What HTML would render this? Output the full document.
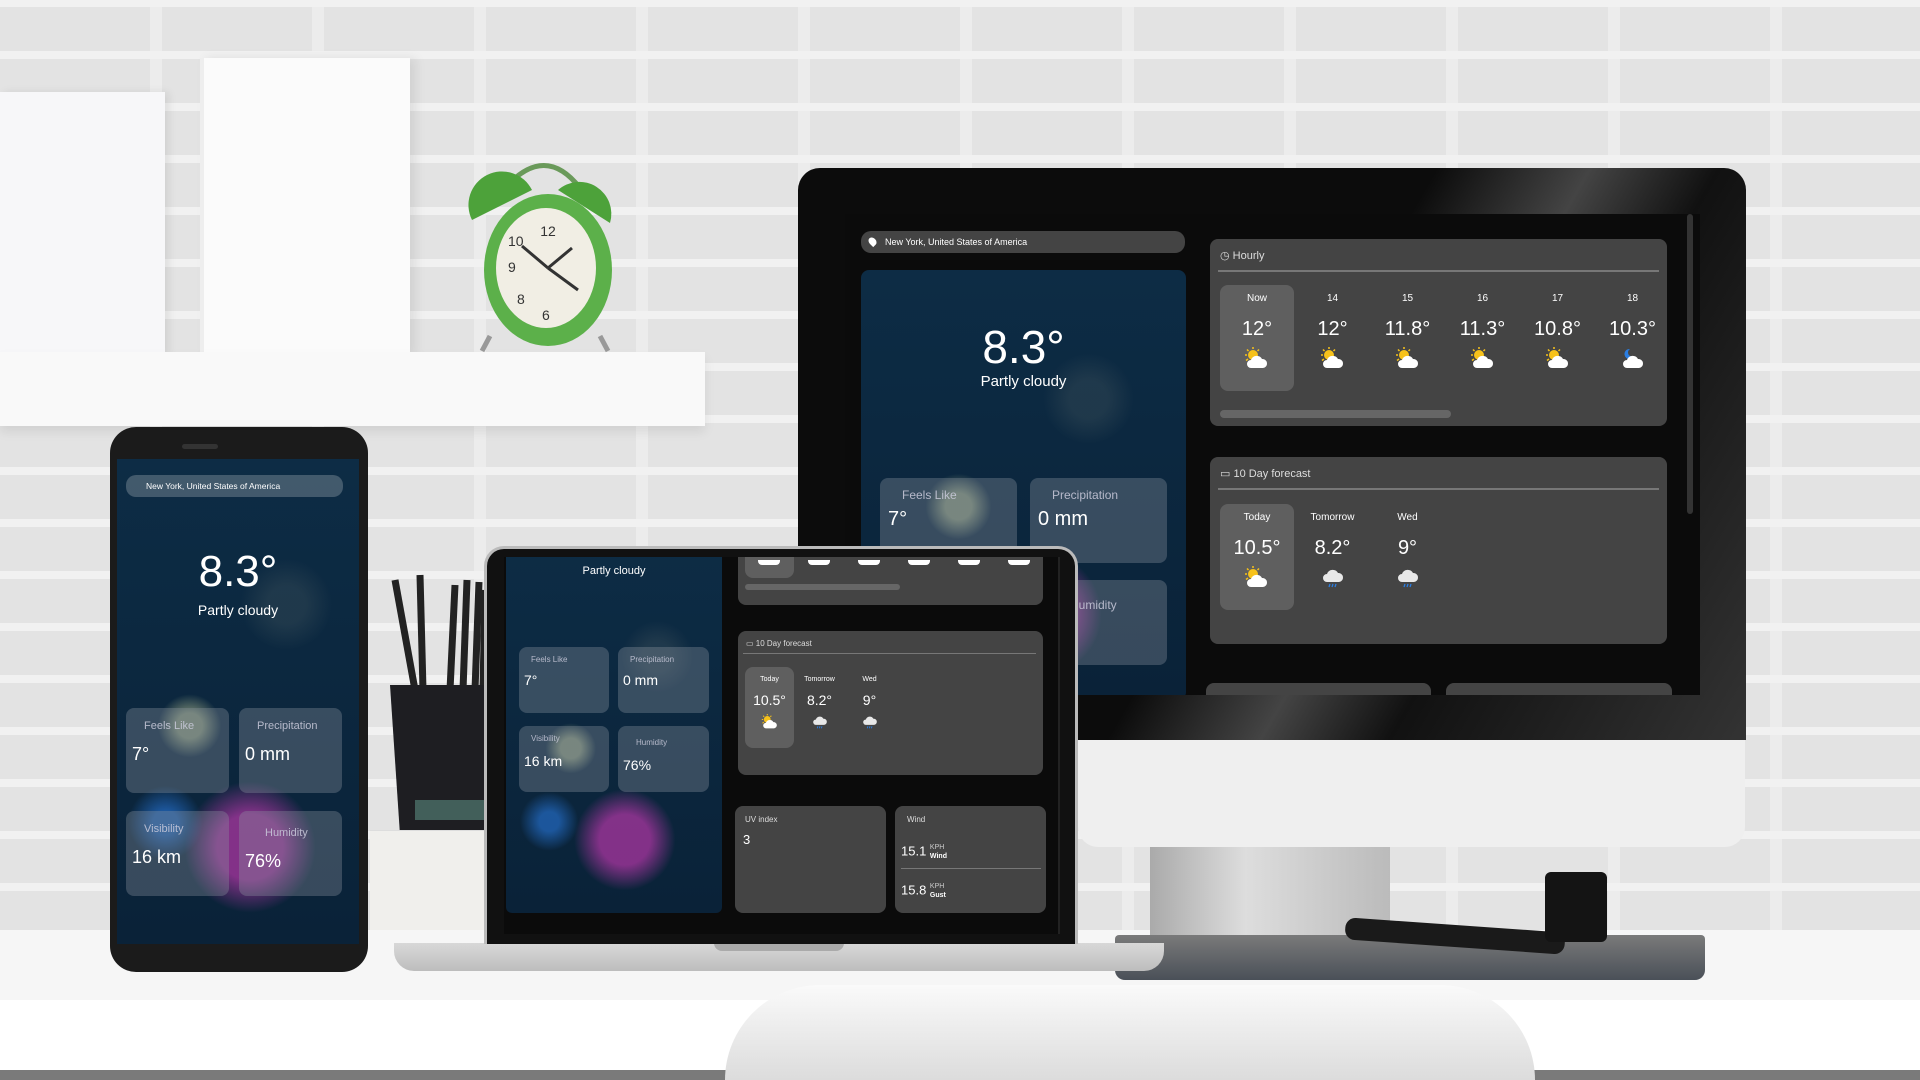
<!DOCTYPE html>
<html><head><meta charset="utf-8"><style>
*{margin:0;padding:0;box-sizing:border-box}
html,body{width:1920px;height:1080px;overflow:hidden}
body{position:relative;font-family:"Liberation Sans",sans-serif;background:#ececec}
.a{position:absolute}
.bricks{background-color:#ececec;background-image:
repeating-linear-gradient(0deg,transparent 0 44px,#f1f1f1 44px 52px),
repeating-linear-gradient(90deg,#e3e3e3 0 150px,#ececec 150px 162px);}
.hero{background:radial-gradient(circle at 30% 55%,rgba(190,200,150,.55) 0 4%,transparent 10%),radial-gradient(circle at 20% 75%,rgba(40,120,220,.6) 0 3%,transparent 9%),radial-gradient(circle at 55% 80%,rgba(230,60,200,.55) 0 8%,transparent 16%),radial-gradient(circle at 70% 30%,rgba(60,80,90,.4) 0 5%,transparent 12%),linear-gradient(#0d2c45,#0a2238);color:#fff;overflow:hidden}
.tile{position:absolute;background:rgba(140,150,160,.35);border-radius:8px;color:#fff}
.tile .h{color:#ccd;opacity:.85}
.card{position:absolute;background:#444;border-radius:8px;color:#fff}
.cell{position:absolute;text-align:center;color:#fff}
.sel{background:#5f5f5f;border-radius:8px}
.ic{display:block;margin:6px auto 0}
</style></head><body>
<svg width="0" height="0" style="position:absolute">
<defs>
<symbol id="sc" viewBox="0 0 26 22"><circle cx="9" cy="8" r="5" fill="#f7c21a"/><g stroke="#f7c21a" stroke-width="1.5"><path d="M9 0v2M1 8H3M3 2.5l1.5 1.5M15 2.5L13.5 4M2 13.5l2-1.5"/></g><path d="M7 21a4 4 0 0 1 0-8 6 6 0 0 1 11-1 4.5 4.5 0 0 1 1 9z" fill="#fff"/></symbol>
<symbol id="mc" viewBox="0 0 26 22"><path d="M10 2a5 5 0 1 0 4 7 4 4 0 0 1-4-7z" fill="#2a7de1"/><path d="M7 21a4 4 0 0 1 0-8 6 6 0 0 1 11-1 4.5 4.5 0 0 1 1 9z" fill="#fff"/></symbol>
<symbol id="rc" viewBox="0 0 26 22"><path d="M7 16a4 4 0 0 1 0-8 6 6 0 0 1 11-1 4.5 4.5 0 0 1 1 9z" fill="#e8e8e8"/><path d="M10 18l-1 3M13 18l-1 3M16 18l-1 3" stroke="#2a7de1" stroke-width="1.3"/></symbol>
</defs></svg>
<div class="a bricks" style="left:0;top:0;width:1920px;height:935px"></div>
<!-- shelf -->
<div class="a" style="left:0;top:92px;width:165px;height:264px;background:#f7f7f9;box-shadow:4px 0 8px rgba(0,0,0,.08)"></div>
<div class="a" style="left:200px;top:58px;width:210px;height:298px;background:#fbfbfb;border-left:4px solid #eee;box-shadow:6px 0 10px rgba(0,0,0,.08)"></div>
<div class="a" style="left:0;top:352px;width:705px;height:74px;background:#f9f9f9;box-shadow:0 6px 10px rgba(0,0,0,.08)"></div>
<!-- clock -->
<svg class="a" style="left:460px;top:148px" width="170" height="210" viewBox="0 0 170 210">
<path d="M45 40 Q85 -5 120 40" stroke="#6a9a5a" stroke-width="5" fill="none"/>
<path d="M12 72 A32 32 0 0 1 72 42 Z" fill="#4da23a"/><path d="M98 42 A32 32 0 0 1 150 75 Z" fill="#4da23a"/>
<ellipse cx="88" cy="122" rx="64" ry="76" fill="#5cb04a"/>
<ellipse cx="86" cy="120" rx="50" ry="60" fill="#f1eee4"/>
<text x="88" y="88" font-size="14" text-anchor="middle" fill="#333">12</text>
<text x="48" y="124" font-size="14" fill="#333">9</text><text x="57" y="156" font-size="14" fill="#333">8</text>
<text x="82" y="172" font-size="14" fill="#333">6</text><text x="48" y="98" font-size="14" fill="#333">10</text>
<path d="M88 120 L62 98 M88 120 L112 100 M88 120 L118 142" stroke="#333" stroke-width="3"/>
<path d="M30 188 l-8 15 M140 188 l8 15" stroke="#999" stroke-width="5"/>
</svg>
<!-- pencils & cup -->
<svg class="a" style="left:375px;top:560px" width="115" height="280" viewBox="0 0 115 280">
<g stroke="#222" stroke-width="7"><path d="M20 20 L40 130"/><path d="M45 15 L48 130"/><path d="M80 25 L75 130"/><path d="M92 20 L88 130"/><path d="M104 22 L100 130"/><path d="M110 30 L108 130"/></g>
<path d="M15 125 H115 V275 H25 Z" fill="#1e1e22"/>
<rect x="40" y="240" width="75" height="20" fill="#5a8a80" opacity=".6"/>
</svg>
<div class="a" style="left:370px;top:830px;width:120px;height:115px;background:#f0efec;border-top:1px solid #ddd"></div>
<!-- desk -->
<div class="a" style="left:0;top:930px;width:1920px;height:150px;background:#f6f6f6"></div>
<div class="a" style="left:0;top:1000px;width:1920px;height:70px;background:#fff"></div>
<div class="a" style="left:0;top:1070px;width:1920px;height:10px;background:#7a7a7a"></div>
<div class="a" style="left:725px;top:985px;width:810px;height:95px;background:linear-gradient(#fafafa,#dcdcdc);border-radius:140px 140px 0 0"></div>
<!-- monitor -->
<div class="a" style="left:1150px;top:845px;width:240px;height:95px;background:linear-gradient(90deg,#aaa,#ddd 40%,#bbb)"></div>
<div class="a" style="left:1115px;top:935px;width:590px;height:45px;background:linear-gradient(#7a7a7a,#4a5058);border-radius:4px 4px 10px 10px"></div>
<div class="a" style="left:1345px;top:925px;width:220px;height:22px;background:#1a1a1a;border-radius:10px;transform:rotate(4deg)"></div>
<div class="a" style="left:1545px;top:872px;width:62px;height:70px;background:#141414;border-radius:6px"></div>
<div class="a" style="left:1078px;top:735px;width:667px;height:112px;background:#efefef;border-radius:0 0 20px 20px"></div>
<div class="a" style="left:798px;top:168px;width:948px;height:572px;background:linear-gradient(120deg,#0c0c0c 50%,#444 62%,#111 72%,#333);border-radius:22px 22px 0 0"></div>
<div class="a" style="left:845px;top:214px;width:855px;height:481px;background:#0b0b0b;overflow:hidden">
 <div class="a" style="left:16px;top:17px;width:324px;height:22px;background:#444;border-radius:10px;color:#fff;font-size:9px;line-height:22px;padding-left:24px">New York, United States of America<span class="a" style="left:8px;top:6px;width:7px;height:9px;background:#fff;border-radius:50% 50% 50% 0;transform:rotate(-45deg)"></span></div>
 <div class="a hero" style="left:16px;top:56px;width:325px;height:430px;border-radius:8px">
  <div class="a" style="left:0;width:325px;top:50px;text-align:center;font-size:46px">8.3°</div>
  <div class="a" style="left:0;width:325px;top:103px;text-align:center;font-size:15px">Partly cloudy</div>
  <div class="tile" style="left:19px;top:208px;width:137px;height:85px"><div class="h" style="font-size:12px;margin:10px 0 0 22px">Feels Like</div><div style="font-size:20px;margin:6px 0 0 8px">7°</div></div>
  <div class="tile" style="left:169px;top:208px;width:137px;height:85px"><div class="h" style="font-size:12px;margin:10px 0 0 22px">Precipitation</div><div style="font-size:20px;margin:6px 0 0 8px">0 mm</div></div>
  <div class="tile" style="left:169px;top:310px;width:137px;height:85px"><div class="h" style="font-size:12px;margin:18px 0 0 40px">Humidity</div></div>
 </div>
 <div class="card" style="left:365px;top:25px;width:457px;height:187px">
  <div class="a" style="left:10px;top:10px;font-size:11px;color:#ddd">◷ Hourly</div>
  <div class="a" style="left:8px;top:31px;width:441px;height:2px;background:#777"></div>
  <div class="cell sel" style="left:10px;top:46px;width:74px;height:106px"></div>
  <div class="a" style="left:10px;top:171px;width:231px;height:8px;border-radius:4px;background:#666"></div>
 </div>
 <div class="card" style="left:365px;top:243px;width:457px;height:187px">
  <div class="a" style="left:10px;top:10px;font-size:11px;color:#ddd">▭ 10 Day forecast</div>
  <div class="a" style="left:8px;top:31px;width:441px;height:2px;background:#777"></div>
  <div class="cell sel" style="left:10px;top:47px;width:74px;height:106px"></div>
 </div>
 <div class="card" style="left:361px;top:469px;width:225px;height:40px"></div>
 <div class="card" style="left:601px;top:469px;width:226px;height:40px"></div>
 <div class="a" style="left:842px;top:0;width:6px;height:300px;background:#333;border-radius:3px"></div>
</div>
<!-- laptop -->
<div class="a" style="left:394px;top:943px;width:770px;height:28px;background:linear-gradient(#d8d8d8,#bdbdbd);border-radius:0 0 20px 20px"></div>
<div class="a" style="left:714px;top:943px;width:130px;height:8px;background:#aaa;border-radius:0 0 8px 8px"></div>
<div class="a" style="left:484px;top:546px;width:594px;height:398px;background:#111;border-radius:20px 20px 0 0;border:3px solid #bbb;border-bottom:none"></div>
<div class="a" style="left:504px;top:557px;width:556px;height:377px;background:#0b0b0b;overflow:hidden">
 <div class="a hero" style="left:2px;top:-10px;width:216px;height:366px;border-radius:6px">
  <div class="a" style="left:0;width:216px;top:18px;text-align:center;font-size:11px">Partly cloudy</div>
  <div class="tile" style="left:13px;top:100px;width:90px;height:66px"><div class="h" style="font-size:8px;margin:8px 0 0 12px">Feels Like</div><div style="font-size:14px;margin:8px 0 0 5px">7°</div></div>
  <div class="tile" style="left:112px;top:100px;width:91px;height:66px"><div class="h" style="font-size:8px;margin:8px 0 0 12px">Precipitation</div><div style="font-size:14px;margin:8px 0 0 5px">0 mm</div></div>
  <div class="tile" style="left:13px;top:179px;width:90px;height:66px"><div class="h" style="font-size:8px;margin:8px 0 0 12px">Visibility</div><div style="font-size:14px;margin:10px 0 0 5px">16 km</div></div>
  <div class="tile" style="left:112px;top:179px;width:91px;height:66px"><div class="h" style="font-size:8px;margin:12px 0 0 18px">Humidity</div><div style="font-size:14px;margin:10px 0 0 5px">76%</div></div>
 </div>
 <div class="card" style="left:234px;top:-10px;width:305px;height:58px">
  <div class="cell sel" style="left:7px;top:0;width:49px;height:31px"></div>
  <div class="a" style="left:20px;top:13px;width:22px;height:5px;background:#fff;border-radius:0 0 4px 4px;box-shadow:50px 0 #fff,100px 0 #fff,150px 0 #fff,200px 0 #fff,250px 0 #fff"></div>
  <div class="a" style="left:7px;top:37px;width:155px;height:6px;border-radius:3px;background:#666"></div>
 </div>
 <div class="card" style="left:234px;top:74px;width:305px;height:144px">
  <div class="a" style="left:8px;top:8px;font-size:8px;color:#ddd">▭ 10 Day forecast</div>
  <div class="a" style="left:5px;top:22px;width:293px;height:1px;background:#777"></div>
  <div class="cell sel" style="left:7px;top:36px;width:49px;height:81px"></div>
  <div class="cell" style="left:7px;top:45px;width:49px;font-size:7px">Today<div style="font-size:14px;margin-top:9px">10.5°</div><svg class="ic" width="18" height="15"><use href="#sc"/></svg></div>
  <div class="cell" style="left:57px;top:45px;width:49px;font-size:7px">Tomorrow<div style="font-size:14px;margin-top:9px">8.2°</div><svg class="ic" width="18" height="15"><use href="#rc"/></svg></div>
  <div class="cell" style="left:107px;top:45px;width:49px;font-size:7px">Wed<div style="font-size:14px;margin-top:9px">9°</div><svg class="ic" width="18" height="15"><use href="#rc"/></svg></div>
 </div>
 <div class="card" style="left:231px;top:249px;width:151px;height:107px"><div style="font-size:8px;margin:9px 0 0 10px;color:#ddd">UV index</div><div style="font-size:13px;margin:8px 0 0 8px">3</div></div>
 <div class="card" style="left:391px;top:249px;width:151px;height:107px"><div style="font-size:8px;margin:9px 0 0 12px;color:#ddd">Wind</div>
  <div class="a" style="left:6px;top:37px;font-size:13px">15.1 <span style="font-size:7px;display:inline-block;line-height:9px;vertical-align:middle;color:#ccc">KPH<br><b style="color:#fff">Wind</b></span></div>
  <div class="a" style="left:6px;top:62px;width:140px;height:1px;background:#777"></div>
  <div class="a" style="left:6px;top:76px;font-size:13px">15.8 <span style="font-size:7px;display:inline-block;line-height:9px;vertical-align:middle;color:#ccc">KPH<br><b style="color:#fff">Gust</b></span></div>
 </div>
 <div class="a" style="left:554px;top:0;width:3px;height:377px;background:#222"></div>
</div>
<!-- phone -->
<div class="a" style="left:110px;top:427px;width:258px;height:545px;background:#1b1b1b;border-radius:26px"></div>
<div class="a" style="left:182px;top:444px;width:36px;height:5px;background:#333;border-radius:3px"></div>
<div class="a hero" style="left:117px;top:459px;width:242px;height:485px">
 <div class="a" style="left:9px;top:16px;width:217px;height:22px;background:rgba(90,110,125,.7);border-radius:10px;font-size:8.5px;line-height:22px;padding-left:20px">New York, United States of America</div>
 <div class="a" style="left:0;width:242px;top:88px;text-align:center;font-size:44px">8.3°</div>
 <div class="a" style="left:0;width:242px;top:143px;text-align:center;font-size:14px">Partly cloudy</div>
 <div class="tile" style="left:9px;top:249px;width:103px;height:85px"><div class="h" style="font-size:11px;margin:12px 0 0 18px">Feels Like</div><div style="font-size:18px;margin:12px 0 0 6px">7°</div></div>
 <div class="tile" style="left:122px;top:249px;width:103px;height:85px"><div class="h" style="font-size:11px;margin:12px 0 0 18px">Precipitation</div><div style="font-size:18px;margin:12px 0 0 6px">0 mm</div></div>
 <div class="tile" style="left:9px;top:352px;width:103px;height:85px"><div class="h" style="font-size:11px;margin:12px 0 0 18px">Visibility</div><div style="font-size:18px;margin:12px 0 0 6px">16 km</div></div>
 <div class="tile" style="left:122px;top:352px;width:103px;height:85px"><div class="h" style="font-size:11px;margin:16px 0 0 26px">Humidity</div><div style="font-size:18px;margin:12px 0 0 6px">76%</div></div>
</div>
<!-- monitor hourly / daily values -->
<div class="cell" style="left:1220px;top:293px;width:74px;font-size:10px">Now<div style="font-size:20px;margin-top:14px">12°</div><svg class="ic" width="26" height="22"><use href="#sc"/></svg></div>
<div class="cell" style="left:1295px;top:293px;width:75px;font-size:10px">14<div style="font-size:20px;margin-top:14px">12°</div><svg class="ic" width="26" height="22"><use href="#sc"/></svg></div>
<div class="cell" style="left:1370px;top:293px;width:75px;font-size:10px">15<div style="font-size:20px;margin-top:14px">11.8°</div><svg class="ic" width="26" height="22"><use href="#sc"/></svg></div>
<div class="cell" style="left:1445px;top:293px;width:75px;font-size:10px">16<div style="font-size:20px;margin-top:14px">11.3°</div><svg class="ic" width="26" height="22"><use href="#sc"/></svg></div>
<div class="cell" style="left:1520px;top:293px;width:75px;font-size:10px">17<div style="font-size:20px;margin-top:14px">10.8°</div><svg class="ic" width="26" height="22"><use href="#sc"/></svg></div>
<div class="cell" style="left:1595px;top:293px;width:75px;font-size:10px">18<div style="font-size:20px;margin-top:14px">10.3°</div><svg class="ic" width="26" height="22"><use href="#mc"/></svg></div>
<div class="cell" style="left:1220px;top:512px;width:74px;font-size:10px">Today<div style="font-size:20px;margin-top:14px">10.5°</div><svg class="ic" width="26" height="22"><use href="#sc"/></svg></div>
<div class="cell" style="left:1295px;top:512px;width:75px;font-size:10px">Tomorrow<div style="font-size:20px;margin-top:14px">8.2°</div><svg class="ic" width="26" height="22"><use href="#rc"/></svg></div>
<div class="cell" style="left:1370px;top:512px;width:75px;font-size:10px">Wed<div style="font-size:20px;margin-top:14px">9°</div><svg class="ic" width="26" height="22"><use href="#rc"/></svg></div>
</body></html>
